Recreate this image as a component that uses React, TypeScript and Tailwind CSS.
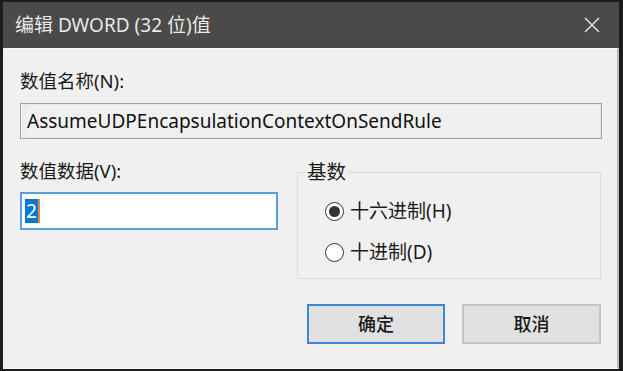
const font = {
  fontFamily: '"Noto Sans", "Noto Sans CJK SC", sans-serif',
};

function Radio({ checked, label }: { checked?: boolean; label: string }) {
  return (
    <div className="flex items-center h-[22px]">
      <div className="w-[19px] h-[19px] rounded-full border border-[#333] bg-white flex items-center justify-center">
        {checked && <div className="w-[11px] h-[11px] rounded-full bg-[#333]" />}
      </div>
      <span className="ml-[6px] text-[19px] text-[#1a1a1a] leading-[22px]">{label}</span>
    </div>
  );
}

export default function App() {
  return (
    <div
      className="w-[623px] h-[371px] bg-[#1c1c1c] pt-[2px] pl-[3px] pr-[4px] pb-[2px] overflow-hidden"
      style={font}
    >
      <div className="w-[616px] h-[367px] flex flex-col">
        {/* title bar */}
        <div className="h-[46px] bg-[#4a4a48] flex items-center justify-between pl-[12px] pr-[19px]">
          <span className="text-[19px] text-[#e8e8e8] leading-none">编辑 DWORD (32 位)值</span>
          <svg width="16" height="16" viewBox="0 0 16 16" className="text-[#e0e0e0]">
            <path d="M1 1 L15 15 M15 1 L1 15" stroke="currentColor" strokeWidth="1.5" />
          </svg>
        </div>

        {/* client area */}
        <div className="flex-1 bg-[#f0f0f0] border-t border-[#fafafa] border-r-2 border-r-[#b9b9b9] border-b border-b-[#fafafa] pl-[17px] pr-[13px] pt-[20px] flex flex-col">
          <div className="text-[18.5px] leading-[24px] text-[#1a1a1a]">数值名称(N):</div>
          <div className="mt-[10px] h-[36px] w-[582px] border border-[#a3a3a3] bg-[#f0f0f0] flex items-center pl-[4px]">
            <div className="w-full h-full border border-[#e6e6e6] flex items-center pl-[1px]">
              <span className="text-[19px] text-[#111] leading-none">AssumeUDPEncapsulationContextOnSendRule</span>
            </div>
          </div>

          <div className="mt-[20px] flex">
            <div className="w-[277px] flex flex-col">
              <div className="text-[18.5px] leading-[24px] text-[#1a1a1a]">数值数据(V):</div>
              <div className="mt-[9px] h-[38px] w-[258px] border-2 border-[#5a9de0] bg-white flex items-center pl-[3px]">
                <span className="bg-[#0078d7] text-white text-[19px] leading-[24px] px-[1px] border-r-2 border-r-[#e08a3a]">2</span>
              </div>
            </div>

            <div className="relative mt-[13px] w-[304px] h-[107px] border border-[#dcdcdc]">
              <span className="absolute -top-[13px] left-[8px] bg-[#f0f0f0] px-[1px] text-[19.5px] leading-[24px] text-[#1a1a1a]">
                基数
              </span>
              <div className="pt-[27px] pl-[27px] flex flex-col gap-[19px]">
                <Radio checked label="十六进制(H)" />
                <Radio label="十进制(D)" />
              </div>
            </div>
          </div>

          <div className="mt-[25px] flex justify-end gap-[17px] pr-[3px]">
            <button className="w-[138px] h-[40px] bg-[#e1e1e1] border-2 border-[#3c86d4] text-[18px] text-[#1a1a1a] font-medium">
              确定
            </button>
            <button className="w-[139px] h-[40px] bg-[#e1e1e1] border-2 border-[#c4c4c4] text-[18px] text-[#1a1a1a] font-medium">
              取消
            </button>
          </div>
        </div>
      </div>
    </div>
  );
}
